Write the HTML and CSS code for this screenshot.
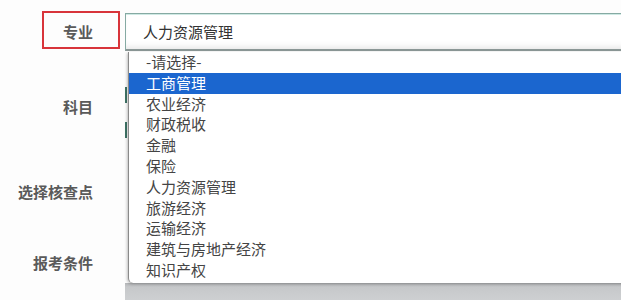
FILE: index.html
```html
<!DOCTYPE html>
<html lang="zh-CN">
<head>
<meta charset="utf-8">
<title>专业选择</title>
<link rel="stylesheet" href="styles.css">
</head>
<body>
<div class="page">
  <div class="form">
    <div class="row row-major">
      <div class="label label-boxed">专业</div>
      <div class="field">
        <div class="select">人力资源管理</div>
      </div>
    </div>
    <div class="row row-subject">
      <div class="label">科目</div>
      <div class="field field-stack">
        <div class="input"></div>
        <div class="input"></div>
      </div>
    </div>
    <div class="row row-check">
      <div class="label">选择核查点</div>
      <div class="field"></div>
    </div>
    <div class="row row-cond">
      <div class="label">报考条件</div>
      <div class="field"></div>
    </div>
    <div class="row row-bottom">
      <div class="label"></div>
      <div class="field band"></div>
    </div>
  </div>
  <ul class="dropdown">
    <li class="opt">-请选择-</li>
    <li class="opt active">工商管理</li>
    <li class="opt">农业经济</li>
    <li class="opt">财政税收</li>
    <li class="opt">金融</li>
    <li class="opt">保险</li>
    <li class="opt">人力资源管理</li>
    <li class="opt">旅游经济</li>
    <li class="opt">运输经济</li>
    <li class="opt">建筑与房地产经济</li>
    <li class="opt">知识产权</li>
  </ul>
</div>
</body>
</html>
```

FILE: styles.css
```css
html, body {
  margin: 0;
  padding: 0;
  background: #fdfdfd;
}
body {
  font-family: "Noto Sans CJK SC", "Noto Sans", sans-serif;
  color: #333;
  overflow: hidden;
}
.page {
  position: relative;
  width: 621px;
  height: 300px;
  overflow: hidden;
}
.form {
  display: flex;
  flex-direction: column;
  padding-top: 11px;
}
.row {
  display: flex;
  align-items: stretch;
}
.label {
  flex: none;
  box-sizing: border-box;
  width: 78px;
  margin-left: 42px;
  margin-right: 5px;
  padding-right: 27px;
  display: flex;
  align-items: center;
  justify-content: flex-end;
  font-size: 15px;
  font-weight: 600;
  color: #5a5a5a;
  white-space: nowrap;
}
.label-boxed {
  border: 2px solid #d8343a;
  height: 38px;
  padding-right: 25px;
  padding-top: 2px;
}
.field {
  flex: 1;
  min-width: 0;
}
.row-major {
  height: 40px;
}
.select {
  box-sizing: border-box;
  margin-top: 2px;
  height: 38px;
  width: 520px;
  border: 1px solid #86aaa3;
  border-bottom: 2px solid #8b9796;
  box-shadow: inset 0 1px 0 #cfe9e4, inset 0 -6px 6px -4px #e6e6e6;
  background: #fff;
  padding-left: 17px;
  display: flex;
  align-items: center;
  font-size: 15px;
  color: #333;
}
.row-subject {
  height: 110px;
}
.field-stack {
  display: flex;
  flex-direction: column;
  gap: 19px;
  padding-top: 36px;
}
.input {
  height: 16px;
  border-left: 2px solid #3f7466;
}
.row-check {
  height: 60px;
}
.row-cond {
  margin-top: 20px;
  height: 42px;
}
.row-bottom {
  height: 20px;
}
.band {
  background: linear-gradient(#b4b6b8, #c6c8ca 4px, #cfd1d3);
}
.dropdown {
  position: absolute;
  left: 128px;
  top: 52px;
  width: 520px;
  height: 231px;
  box-sizing: border-box;
  margin: 0;
  padding: 0 0 2px 0;
  list-style: none;
  background: #fff;
  border-left: 1px solid #8a8a8a;
  border-radius: 0 0 0 5px;
  box-shadow: -1px 1px 3px rgba(0, 0, 0, 0.25);
}
.opt {
  height: 20.8px;
  line-height: 20.8px;
  padding-left: 17px;
  font-size: 15px;
  color: #444;
  white-space: nowrap;
}
.opt.active {
  background: #1b66cf;
  color: #fff;
}
```
